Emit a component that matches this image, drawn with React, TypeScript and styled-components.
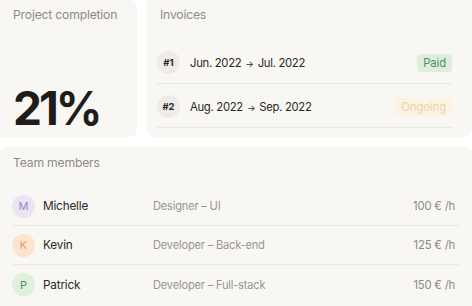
import React from 'react';
import styled, { createGlobalStyle } from 'styled-components';

const GlobalStyle = createGlobalStyle`
  body {
    margin: 0;
    background: #ffffff;
    font-family: Inter, 'Noto Sans', sans-serif;
    -webkit-font-smoothing: antialiased;
  }
`;

const Page = styled.div`
  width: 472px;
  height: 306px;
  overflow: hidden;
  display: grid;
  grid-template-columns: 137px 1fr;
  grid-template-rows: 137px 1fr;
  column-gap: 10px;
  row-gap: 10px;
`;

const Card = styled.div<{ $radius: string }>`
  background: #f8f7f4;
  border-radius: ${(p) => p.$radius};
  padding: 7px 13px 0;
  box-sizing: border-box;
  display: flex;
  flex-direction: column;
`;

const CompletionCard = styled(Card)`
  justify-content: space-between;
  padding-bottom: 4px;
`;

const WideCard = styled(Card)`
  grid-column: 1 / span 2;
  padding-top: 8px;
`;

const CardTitle = styled.div`
  font-size: 12.2px;
  line-height: 16px;
  color: #8e8a85;
  letter-spacing: -0.2px;
`;

const BigValue = styled.div`
  font-size: 46px;
  line-height: 50px;
  font-weight: 700;
  color: #1f1c1a;
  letter-spacing: -3px;
`;

const InvoiceList = styled.div`
  margin-top: 17px;
  margin-left: -3px;
  margin-right: 7px;
  display: flex;
  flex-direction: column;
`;

const InvoiceRow = styled.div`
  height: 44px;
  padding-top: 2px;
  display: flex;
  align-items: center;
  border-bottom: 1px solid #e9e7e3;
  box-sizing: border-box;
`;

const NumberBadge = styled.span`
  width: 23px;
  height: 23px;
  border-radius: 50%;
  background: #efece8;
  display: flex;
  align-items: center;
  justify-content: center;
  font-size: 9.5px;
  font-weight: 700;
  color: #2b2825;
  flex-shrink: 0;
`;

const Period = styled.span`
  margin-left: 10px;
  font-size: 11.3px;
  color: #2b2825;
  letter-spacing: -0.3px;
  flex: 1;
`;

const Arrow = styled.span`
  font-size: 9px;
  margin: 0 4px;
`;

const Status = styled.span<{ $bg: string; $fg: string }>`
  height: 18px;
  padding: 0 6px;
  border-radius: 4px;
  background: ${(p) => p.$bg};
  color: ${(p) => p.$fg};
  font-size: 11.3px;
  letter-spacing: -0.1px;
  display: flex;
  align-items: center;
`;

const MemberList = styled.div`
  margin-top: 16px;
  display: flex;
  flex-direction: column;
`;

const MemberRow = styled.div<{ $last?: boolean }>`
  height: 39px;
  display: grid;
  grid-template-columns: 140px 1fr auto;
  align-items: center;
  padding-right: 4px;
  border-bottom: ${(p) => (p.$last ? 'none' : '1px solid #e9e7e3')};
  box-sizing: border-box;
`;

const Person = styled.div`
  display: flex;
  align-items: center;
  gap: 8px;
  margin-left: -1px;
`;

const Avatar = styled.span<{ $bg: string; $fg: string }>`
  width: 23px;
  height: 23px;
  border-radius: 50%;
  background: ${(p) => p.$bg};
  color: ${(p) => p.$fg};
  display: flex;
  align-items: center;
  justify-content: center;
  font-size: 11px;
`;

const Name = styled.span`
  font-size: 11.8px;
  color: #2b2825;
  letter-spacing: -0.2px;
`;

const Role = styled.span`
  font-size: 11.1px;
  color: #9a9691;
  letter-spacing: -0.2px;
`;

const Rate = styled.span`
  font-size: 11.3px;
  color: #8e8a85;
  letter-spacing: -0.2px;
`;

const invoices = [
  { id: '#1', from: 'Jun. 2022', to: 'Jul. 2022', status: 'Paid', bg: '#ddefdb', fg: '#4f8d64' },
  { id: '#2', from: 'Aug. 2022', to: 'Sep. 2022', status: 'Ongoing', bg: '#fcf3e3', fg: '#ecd2a4' },
];

const members = [
  { initial: 'M', name: 'Michelle', role: 'Designer – UI', rate: '100 € /h', bg: '#ebe4f3', fg: '#9a87c6' },
  { initial: 'K', name: 'Kevin', role: 'Developer – Back-end', rate: '125 € /h', bg: '#fbe4d0', fg: '#ee9a62' },
  { initial: 'P', name: 'Patrick', role: 'Developer – Full-stack', rate: '150 € /h', bg: '#dff0dc', fg: '#4f8d64' },
];

export default function App() {
  return (
    <>
      <GlobalStyle />
      <Page>
        <CompletionCard $radius="0 8px 8px 0">
          <CardTitle>Project completion</CardTitle>
          <BigValue>21%</BigValue>
        </CompletionCard>
        <Card $radius="0 0 8px 8px">
          <CardTitle>Invoices</CardTitle>
          <InvoiceList>
            {invoices.map((inv) => (
              <InvoiceRow key={inv.id}>
                <NumberBadge>{inv.id}</NumberBadge>
                <Period>
                  {inv.from}
                  <Arrow>→</Arrow>
                  {inv.to}
                </Period>
                <Status $bg={inv.bg} $fg={inv.fg}>{inv.status}</Status>
              </InvoiceRow>
            ))}
          </InvoiceList>
        </Card>
        <WideCard $radius="8px 8px 0 0">
          <CardTitle>Team members</CardTitle>
          <MemberList>
            {members.map((m, i) => (
              <MemberRow key={m.name} $last={i === members.length - 1}>
                <Person>
                  <Avatar $bg={m.bg} $fg={m.fg}>{m.initial}</Avatar>
                  <Name>{m.name}</Name>
                </Person>
                <Role>{m.role}</Role>
                <Rate>{m.rate}</Rate>
              </MemberRow>
            ))}
          </MemberList>
        </WideCard>
      </Page>
    </>
  );
}
